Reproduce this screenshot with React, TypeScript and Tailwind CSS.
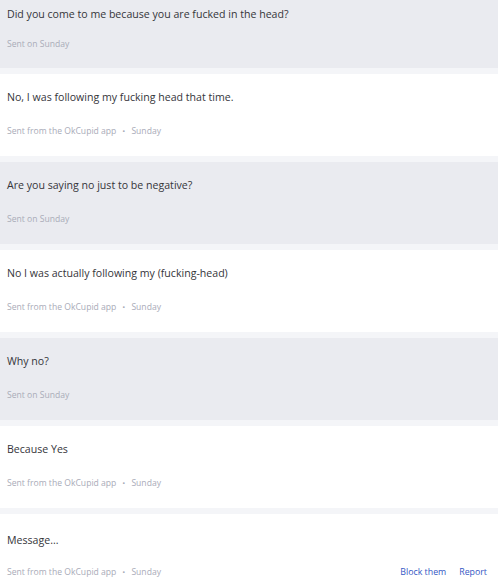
import React from 'react';

type Msg = {
  text: string;
  mine: boolean;
};

const MESSAGES: Msg[] = [
  { text: 'No, I was following my fucking head that time.', mine: true },
  { text: 'Are you saying no just to be negative?', mine: false },
  { text: 'No I was actually following my (fucking-head)', mine: true },
  { text: 'Why no?', mine: false },
  { text: 'Because Yes', mine: true },
];

function Meta({ mine }: { mine: boolean }) {
  if (!mine) return <span>Sent on Sunday</span>;
  return (
    <span className="flex items-center">
      Sent from the OkCupid app
      <span className="mx-[6px] text-[8px]">•</span>
      Sunday
    </span>
  );
}

export default function App() {
  return (
    <div
      className="w-[498px] h-[580px] overflow-hidden bg-[#f4f5f8]"
      style={{ fontFamily: '"Open Sans", "Liberation Sans", sans-serif' }}
    >
      {/* first (cut off) message */}
      <div className="h-[68px] bg-[#eaebf0] px-[7px] pt-[6px]">
        <p className="text-[10.6px] leading-[16px] text-[#35353a]">
          Did you come to me because you are fucked in the head?
        </p>
        <div className="mt-[16px] text-[8.6px] leading-[12px] text-[#a9abb8]">
          <Meta mine={false} />
        </div>
      </div>

      {MESSAGES.map((m, i) => (
        <div
          key={i}
          className={`mt-[6px] h-[82px] px-[7px] pt-[15px] ${m.mine ? 'bg-white' : 'bg-[#eaebf0]'}`}
        >
          <p className="text-[10.6px] leading-[16px] text-[#35353a]">{m.text}</p>
          <div className="mt-[20px] text-[8.6px] leading-[12px] text-[#a9abb8]">
            <Meta mine={m.mine} />
          </div>
        </div>
      ))}

      {/* composer */}
      <div className="mt-[6px] h-[66px] bg-white px-[7px] pt-[18px]">
        <p className="text-[10.6px] leading-[16px] text-[#35353a]">Message...</p>
        <div className="mt-[18px] flex items-center justify-between pr-[4px] leading-[12px]">
          <div className="text-[8.6px] text-[#a9abb8]">
            <Meta mine={true} />
          </div>
          <div className="flex gap-[13px] text-[8.8px] text-[#3557c4]">
            <span>Block them</span>
            <span>Report</span>
          </div>
        </div>
      </div>
    </div>
  );
}
